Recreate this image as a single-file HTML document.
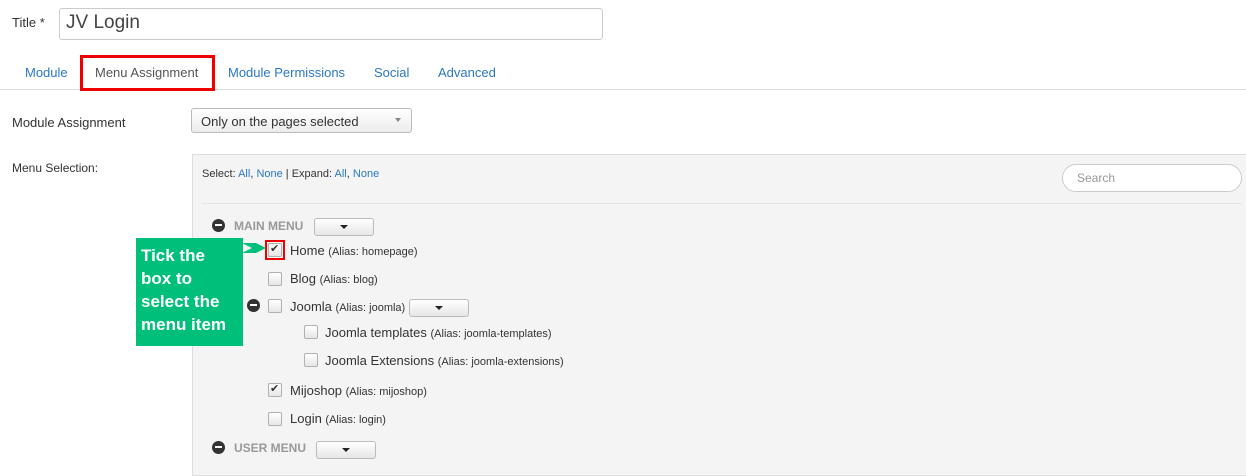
<!DOCTYPE html>
<html><head><meta charset="utf-8"><style>
body{margin:0;width:1246px;height:462px;background:#fff;font-family:"Liberation Sans",Arial,sans-serif;color:#333;position:relative;overflow:hidden}
.a{position:absolute;white-space:nowrap}
.lnk{color:#2a78c4}
.cb{position:absolute;width:12px;height:12px;border:1px solid #b0b0b0;border-radius:2px;background:linear-gradient(#fff,#e6e6e6)}
.mi{position:absolute;width:13px;height:13px;border-radius:50%;background:#333}
.mi:after{content:"";position:absolute;left:3px;top:5px;width:7px;height:2px;background:#fff}
.dd{position:absolute;width:58px;height:16px;border:1px solid #bbb;border-radius:3px;background:linear-gradient(#fff,#e6e6e6)}
.dd:after{content:"";position:absolute;left:25px;top:6px;border-left:4px solid transparent;border-right:4px solid transparent;border-top:4px solid #222}
.item{font-size:13px;color:#333}
.item small{font-size:11px}
.ck{position:absolute;font-size:11px;color:#333}
</style></head><body>
<div class="a" style="left:12px;top:15px;font-size:13px">Title *</div>
<div class="a" style="left:59px;top:8px;width:542px;height:30px;border:1px solid #ccc;border-radius:3px"></div>
<div class="a" style="left:66px;top:12px;font-size:19px;color:#444">JV Login</div>
<div class="a" style="left:0;top:89px;width:1246px;height:1px;background:#ddd"></div>
<div class="a lnk" style="left:25px;top:65px;font-size:13px">Module</div>
<div class="a" style="left:80px;top:55px;border:3px solid #e00;width:129px;height:30px"></div>
<div class="a" style="left:95px;top:65px;font-size:13px;color:#555">Menu Assignment</div>
<div class="a lnk" style="left:228px;top:65px;font-size:13px">Module Permissions</div>
<div class="a lnk" style="left:374px;top:65px;font-size:13px">Social</div>
<div class="a lnk" style="left:438px;top:65px;font-size:13px">Advanced</div>
<div class="a" style="left:12px;top:115px;font-size:13px">Module Assignment</div>
<div class="a" style="left:191px;top:108px;width:219px;height:23px;border:1px solid #bbb;border-radius:3px;background:linear-gradient(#fff,#ececec)"></div>
<div class="a" style="left:201px;top:114px;font-size:13px">Only on the pages selected</div>
<div class="a" style="left:395px;top:118px;border-left:3px solid transparent;border-right:3px solid transparent;border-top:4px solid #888"></div>
<div class="a" style="left:12px;top:161px;font-size:12px">Menu Selection:</div>
<div class="a" style="left:192px;top:154px;width:1060px;height:320px;background:#f4f4f4;border:1px solid #ddd"></div>
<div class="a" style="left:202px;top:168px;font-size:11px">Select: <span class="lnk">All</span>, <span class="lnk">None</span> | Expand: <span class="lnk">All</span>, <span class="lnk">None</span></div>
<div class="a" style="left:1062px;top:164px;width:178px;height:26px;border:1px solid #ccc;border-radius:14px;background:#fff"></div>
<div class="a" style="left:1077px;top:171px;font-size:12px;color:#999">Search</div>
<div class="a" style="left:202px;top:203px;width:1040px;height:1px;background:#e4e4e4"></div>
<div class="mi" style="left:212px;top:219px"></div>
<div class="a" style="left:234px;top:219px;font-size:12px;font-weight:bold;color:#999">MAIN MENU</div>
<div class="dd" style="left:314px;top:218px"></div>
<div class="cb" style="left:268px;top:243px"></div>
<div class="a" style="left:265px;top:240px;width:16px;height:16px;border:2px solid #e00"></div>
<div class="ck" style="left:270px;top:242px">✔</div>
<div class="a item" style="left:290px;top:243px">Home <small>(Alias: homepage)</small></div>
<div class="cb" style="left:268px;top:272px"></div>
<div class="a item" style="left:290px;top:271px">Blog <small>(Alias: blog)</small></div>
<div class="mi" style="left:247px;top:299px"></div>
<div class="cb" style="left:268px;top:299px"></div>
<div class="a item" style="left:290px;top:299px">Joomla <small>(Alias: joomla)</small></div>
<div class="dd" style="left:409px;top:299px"></div>
<div class="cb" style="left:304px;top:325px"></div>
<div class="a item" style="left:325px;top:325px">Joomla templates <small>(Alias: joomla-templates)</small></div>
<div class="cb" style="left:304px;top:353px"></div>
<div class="a item" style="left:325px;top:353px">Joomla Extensions <small>(Alias: joomla-extensions)</small></div>
<div class="cb" style="left:268px;top:383px"></div>
<div class="ck" style="left:270px;top:382px">✔</div>
<div class="a item" style="left:290px;top:383px">Mijoshop <small>(Alias: mijoshop)</small></div>
<div class="cb" style="left:268px;top:412px"></div>
<div class="a item" style="left:290px;top:411px">Login <small>(Alias: login)</small></div>
<div class="mi" style="left:212px;top:441px"></div>
<div class="a" style="left:234px;top:441px;font-size:12px;font-weight:bold;color:#999">USER MENU</div>
<div class="dd" style="left:316px;top:441px"></div>
<div class="a" style="left:136px;top:238px;width:107px;height:108px;background:#00bf7a"></div>
<div class="a" style="left:141px;top:244px;font-size:17px;font-weight:bold;color:#fff;line-height:23px">Tick the<br>box to<br>select the<br>menu item</div>
<svg class="a" style="left:242px;top:237px" width="26" height="22"><polygon points="0,6 14,6 24,11 14,16 0,16 10,11" fill="#00bf7a"/></svg>
</body></html>
